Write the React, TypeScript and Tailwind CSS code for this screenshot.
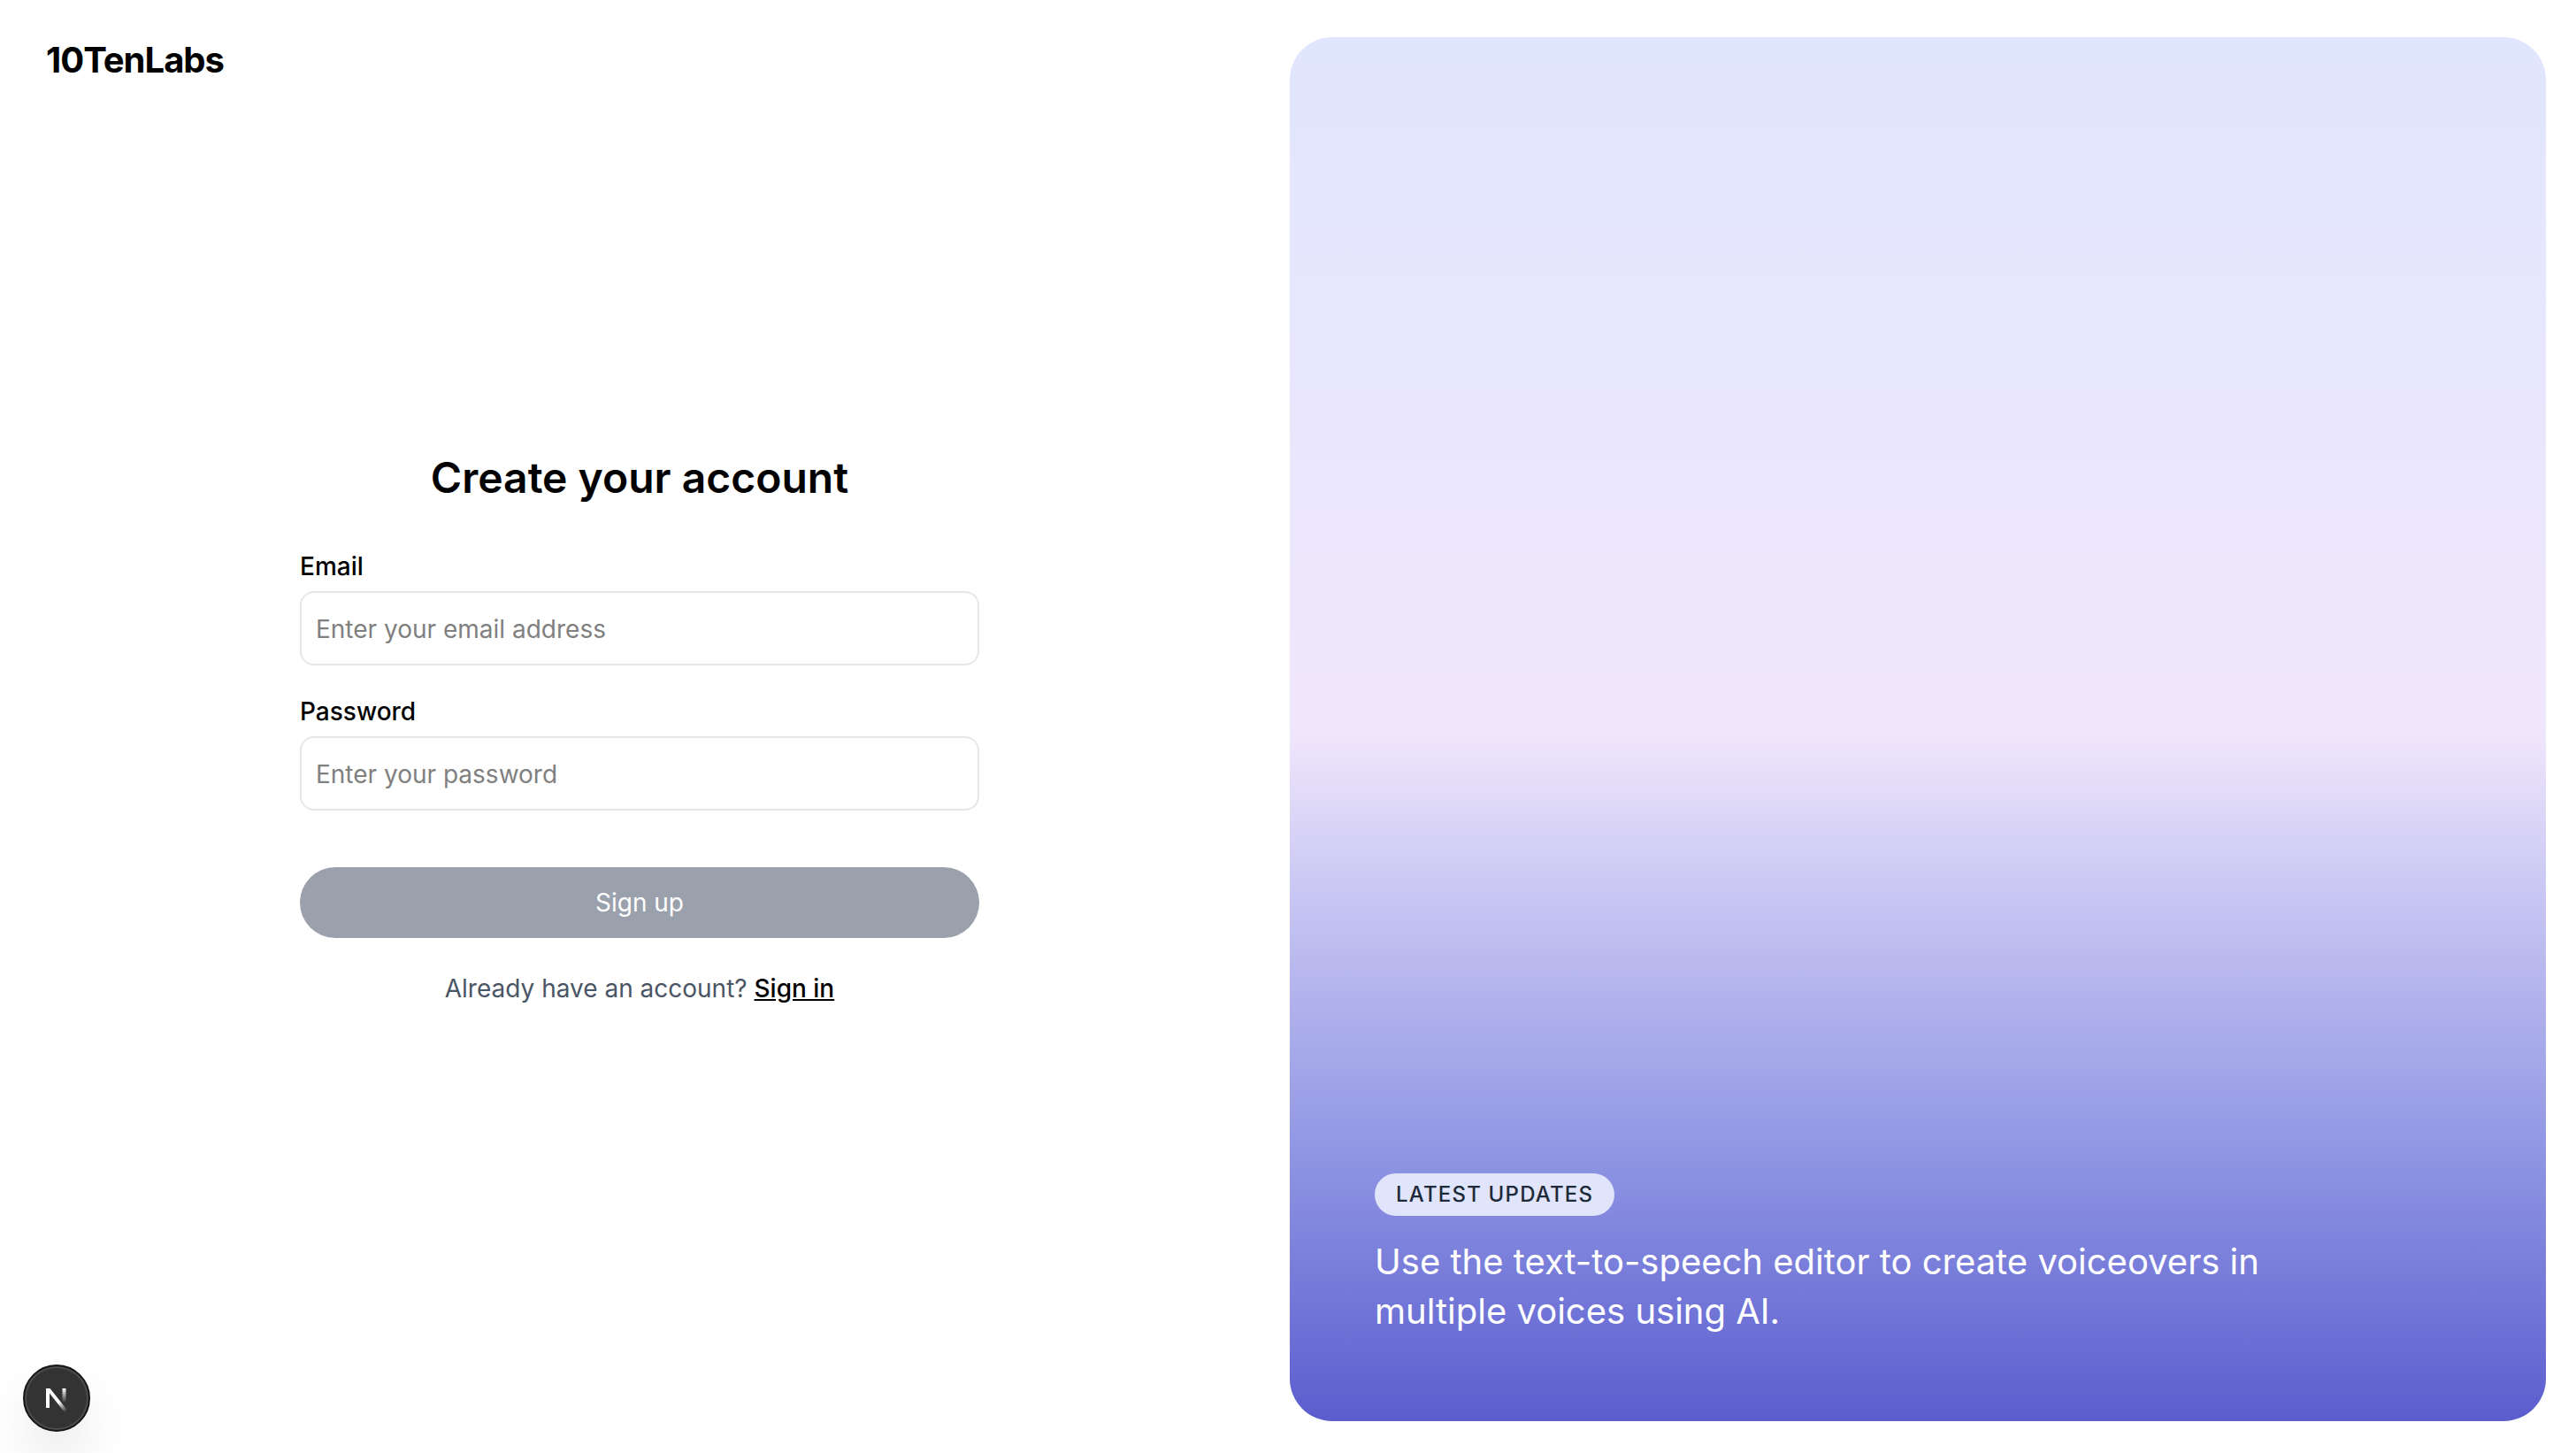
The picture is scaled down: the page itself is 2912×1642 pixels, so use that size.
export default function App() {
  return (
    <div className="grid min-h-screen grid-cols-2 bg-white font-['Inter',sans-serif] text-black">
      <main className="flex flex-col pt-10 pr-[62px] pb-[92px] pl-[52px]">
        <h1 className="text-[40px] leading-14 font-bold tracking-tight">10TenLabs</h1>
        <div className="flex flex-1 flex-col items-center justify-center">
          <form className="flex w-full max-w-[768px] flex-col text-[28px]">
            <h2 className="text-center text-[48px] leading-16 font-semibold">Create your account</h2>
            <label htmlFor="email" className="mt-12 leading-10 font-medium">Email</label>
            <input id="email" type="email" placeholder="Enter your email address" className="mt-2 h-[84px] rounded-2xl border-2 border-gray-200 px-4 pt-0.5 placeholder:text-[#808080]" />
            <label htmlFor="password" className="mt-8 leading-10 font-medium">Password</label>
            <input id="password" type="password" placeholder="Enter your password" className="mt-2 h-[84px] rounded-2xl border-2 border-gray-200 px-4 pt-0.5 placeholder:text-[#808080]" />
            <button type="button" className="mt-16 h-20 rounded-full bg-[#9aa0ac] text-white">Sign up</button>
            <p className="mt-9 text-center leading-[42px] text-gray-600">
              Already have an account?{' '}
              <a href="#signin" className="font-medium text-black underline">Sign in</a>
            </p>
          </form>
        </div>
      </main>

      <aside className="flex pt-[42px] pr-[34px] pb-9 pl-0.5">
        <div className="flex flex-1 flex-col items-start justify-end rounded-[48px] bg-[linear-gradient(to_bottom,#e0e6fd_0%,#f1e7fc_50%,#c8c6f3_62%,#8c92e2_82%,#5b5dce_100%)] px-24 pb-24">
          <span className="rounded-full bg-[#e0e5fb] px-6 py-1 text-[24px] leading-10 font-medium tracking-wider text-gray-800">LATEST UPDATES</span>
          <p className="mt-6 max-w-[1060px] text-[40px] leading-14 text-white">
            Use the text-to-speech editor to create voiceovers in multiple voices using AI.
          </p>
        </div>
      </aside>

      <button
        type="button"
        aria-label="Open Next.js Dev Tools"
        className="fixed bottom-6 left-[26px] flex size-[76px] items-center justify-center rounded-full border-2 border-[#171717] bg-[#333] shadow-[inset_0_0_0_2px_#4d4d4d,0_32px_64px_-16px_rgba(0,0,0,0.24)]"
      >
        <svg width="28" height="32" viewBox="0 0 28 32" fill="none" aria-hidden="true">
          <defs>
            <linearGradient id="stem" x1="0" y1="0" x2="0" y2="1">
              <stop stopColor="#fff" />
              <stop offset="1" stopColor="#fff" stopOpacity="0" />
            </linearGradient>
            <linearGradient id="slash" x1="17" y1="20" x2="25" y2="31" gradientUnits="userSpaceOnUse">
              <stop stopColor="#fff" />
              <stop offset="1" stopColor="#fff" stopOpacity="0" />
            </linearGradient>
          </defs>
          <path d="M2 27V5h4.500L26 29.500L23 32L6 10.500V27Z" fill="url(#slash)" />
          <rect x="20.500" y="5" width="4" height="16" fill="url(#stem)" />
        </svg>
      </button>
    </div>
  );
}
